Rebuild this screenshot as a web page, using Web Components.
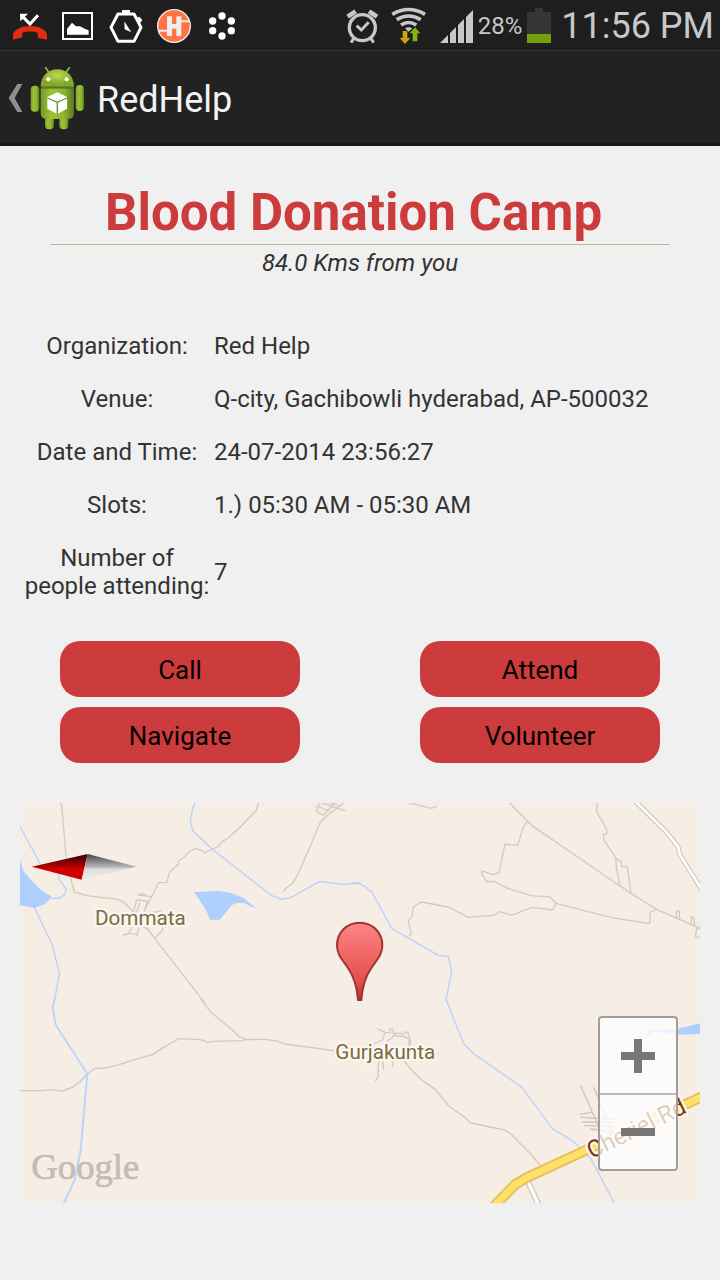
<!DOCTYPE html>
<html lang="en">
<head>
<meta charset="utf-8">
<meta name="viewport" content="width=device-width, initial-scale=1">
<title>RedHelp</title>
<style>
  html, body { margin: 0; background: #f0f0f0; }
  body { font-family: Roboto, "Noto Sans", sans-serif; color: #333; }
</style>
</head>
<body>
<status-bar></status-bar>
<action-bar>RedHelp</action-bar>
<main>
  <event-heading>Blood Donation Camp<span slot="distance">84.0 Kms from you</span></event-heading>
  <event-details></event-details>
  <action-grid>
    <pill-button>Call</pill-button>
    <pill-button>Attend</pill-button>
    <pill-button>Navigate</pill-button>
    <pill-button>Volunteer</pill-button>
  </action-grid>
  <venue-map></venue-map>
</main>

<script>
const define = (name, html) => {
  const template = document.createElement('template');
  template.innerHTML = html;
  customElements.define(name, class extends HTMLElement {
    constructor() {
      super();
      this.attachShadow({ mode: 'open' }).append(template.content.cloneNode(true));
    }
  });
};

define('status-bar', `
<style>
  :host { display: flex; align-items: center; justify-content: space-between; box-sizing: border-box; height: 51px; padding: 2px 6px 0 12px; background: #1e1e1e; border-bottom: 1px solid #333; color: #c8c8c8; }
  .notices { display: flex; gap: 12px; }
  .system { display: flex; align-items: center; }
  svg { display: block; flex: none; }
  .alarm { margin-right: 10px; }
  .wifi { margin-right: 12px; }
  .level { font-size: 24px; line-height: 32px; margin: 0 4px; }
  .clock { font-size: 36px; line-height: 48px; margin-left: 9px; }
</style>
<div class="notices">
  <svg width="36" height="36" viewBox="36 24 108 108" role="img" aria-label="Missed call">
    <path d="M65 47 90 72 114 46" fill="none" stroke="#fff" stroke-width="9"/><path d="M60 41H84L61 64Z" fill="#fff"/>
    <path d="M39 119V102C44 88 65 78 90 78S136 88 141 102V119L113 113V98C100 93 80 93 67 98V112Z" fill="#e22c14"/>
  </svg>
  <svg width="36" height="36" viewBox="180 24 108 108" role="img" aria-label="Picture">
    <rect x="189" y="39" width="87" height="78" fill="none" stroke="#fff" stroke-width="6"/>
    <path d="M201 104V87L216 68 228 79 240 79 254 86 266 91V104Z" fill="#fff"/>
  </svg>
  <svg width="36" height="36" viewBox="324 24 108 108" role="img" aria-label="Timer">
    <path d="M354 42H402L423 82 402 124H354L333 82Z" fill="none" stroke="#fff" stroke-width="9" stroke-linejoin="round"/>
    <path d="M366 30H390V44H366ZM410 54 418 50 427 60 420 70ZM373 64 394 97 374 88Z" fill="#fff"/>
  </svg>
  <svg width="36" height="36" viewBox="468 24 108 108" role="img" aria-label="H app">
    <circle cx="522" cy="78" r="49" fill="#ff7440" stroke="#eee" stroke-width="4"/>
    <path d="M475 92H508M536 64H569" stroke="#eee" stroke-width="6"/>
    <path d="M501 49H516V72H529V49H544V108H529V86H516V108H501Z" fill="#eee"/>
    <path d="M497 45V86H475M548 112V71H570" stroke="#ff7440" stroke-width="2" fill="none"/>
  </svg>
  <svg width="36" height="36" viewBox="612 24 108 108" role="img" aria-label="Sync" fill="#fff">
    <circle cx="666" cy="48" r="11"/><circle cx="694" cy="63" r="11"/><circle cx="694" cy="92" r="11"/><circle cx="666" cy="108" r="11"/><circle cx="638" cy="92" r="11"/><circle cx="638" cy="63" r="11"/>
  </svg>
</div>
<div class="system">
  <svg class="alarm" width="36" height="36" viewBox="39 24 108 108" role="img" aria-label="Alarm set" fill="none" stroke="#c8c8c8">
    <circle cx="94" cy="83" r="39" stroke-width="10"/>
    <path d="M77 77 91 90 113 67" stroke-width="9"/>
    <path d="M50 50 74 34M114 34 138 50" stroke-width="14"/>
    <path d="M68 116 60 128M120 116 128 128" stroke-width="9"/>
  </svg>
  <svg class="wifi" width="38" height="40" viewBox="180 18 114 120" role="img" aria-label="Wi-Fi">
    <g fill="none" stroke="#c8c8c8" stroke-width="11"><path d="M187 43Q236 14 285 43"/><path d="M200 59Q236 37 272 59"/><path d="M213 75Q236 60 259 75"/></g>
    <path d="M225 85Q236 78 247 85L236 95Z" fill="#c8c8c8"/>
    <path d="M218 93H232V114H241L225 132 209 114H218Z" fill="#cba50c"/>
    <path d="M255 82 271 100H262V124H248V100H239Z" fill="#7fb80c"/>
  </svg>
  <svg width="34" height="36" viewBox="330 27 102 108" role="img" aria-label="Signal strength" fill="#c8c8c8">
    <path d="M330 132 354 108V132ZM360 102 378 84V132H360ZM384 78 402 60V132H384ZM408 54 429 33V132H408Z"/>
  </svg>
  <span class="level">28%</span>
  <svg width="26" height="36" viewBox="588 27 78 108" role="img" aria-label="Battery">
    <path d="M615 27H639V39H663V105H591V39H615Z" fill="#363636"/><path d="M591 105H663V132H591Z" fill="#73a00b"/>
  </svg>
  <time class="clock" datetime="23:56">11:56 PM</time>
</div>`);

define('action-bar', `
<style>
  :host { display: flex; align-items: center; box-sizing: border-box; height: 95px; padding: 2px 8px 0; background: #222; border-bottom: 3px solid #181818; color: #f3f3f3; }
  button { display: flex; align-items: center; margin: 0 13px 0 0; padding: 0; border: 0; background: none; }
  svg { display: block; }
  h1 { margin: 0; padding-top: 4px; font-size: 36px; line-height: 48px; font-weight: 400; }
</style>
<button aria-label="Navigate up">
  <svg width="76" height="64" viewBox="24 198 228 192">
    <defs>
      <linearGradient id="g" x2="1"><stop stop-color="#76992a"/><stop offset=".3" stop-color="#9cc136"/><stop offset=".7" stop-color="#8db52f"/><stop offset="1" stop-color="#587b1b"/></linearGradient>
      <radialGradient id="h" cx=".5" cy=".35"><stop stop-color="#bdd957"/><stop offset="1" stop-color="#82a82c"/></radialGradient>
    </defs>
    <path d="M52 252H67L44 294 67 336H52L26 294Z" fill="#8f8f8f"/>
    <path d="M137 203 148 219M208 203 197 219" stroke="#94ba35" stroke-width="5" stroke-linecap="round"/>
    <path d="M122 260C122 228 144 208 172 208S222 228 222 260Z" fill="url(#h)"/>
    <circle cx="145" cy="238" r="6" fill="#fff"/><circle cx="200" cy="238" r="6" fill="#fff"/>
    <g fill="url(#g)">
      <rect x="92" y="257" width="26" height="78" rx="12"/><rect x="227" y="255" width="25" height="78" rx="12"/>
      <rect x="135" y="335" width="27" height="53" rx="12"/><rect x="178" y="335" width="27" height="53" rx="12"/>
      <path d="M122 265H222V338Q222 357 203 357H141Q122 357 122 338Z"/>
    </g>
    <path d="M123 263H221" stroke="#577920" stroke-width="4"/>
    <path d="M172 277 201 291V326L172 342 142 326V291Z" fill="#fff"/>
    <path d="M142 294 172 307 201 294M172 307V341" fill="none" stroke="#688b26" stroke-width="4"/>
  </svg>
</button>
<h1><slot></slot></h1>`);

define('event-heading', `
<style>
  :host { display: block; padding: 36px 50px 0; text-align: center; }
  h2 { margin: 0; padding: 0 13px 1px 0; border-bottom: 1px solid #c9af8c; color: #cc3c3c; font-size: 51px; line-height: 61px; font-weight: 700; }
  p { margin: 4px 0 0; font-size: 24px; line-height: 28px; font-style: italic; }
</style>
<h2><slot></slot></h2>
<p><slot name="distance"></slot></p>`);

define('event-details', `
<style>
  :host { display: block; padding: 42px 20px 0; }
  table { width: 100%; border-collapse: collapse; font-size: 24px; line-height: 28px; }
  th, td { padding: 13px 0 12px; font-weight: 400; vertical-align: middle; }
  th { width: 194px; text-align: center; }
  td { text-align: left; }
</style>
<table>
  <tr><th scope="row">Organization:</th><td>Red Help</td></tr>
  <tr><th scope="row">Venue:</th><td>Q-city, Gachibowli hyderabad, AP-500032</td></tr>
  <tr><th scope="row">Date and Time:</th><td>24-07-2014 23:56:27</td></tr>
  <tr><th scope="row">Slots:</th><td>1.) 05:30 AM - 05:30 AM</td></tr>
  <tr><th scope="row">Number of<br>people attending:</th><td>7</td></tr>
</table>`);

define('action-grid', `
<style>
  :host { display: grid; grid-template-columns: 1fr 1fr; gap: 10px 120px; padding: 29px 60px 40px; }
</style>
<slot></slot>`);

define('pill-button', `
<style>
  :host { display: block; }
  button { display: block; width: 100%; height: 56px; padding: 2px 0 0; border: 0; border-radius: 20px; background: #cc3c3c; color: #000; font: 400 26px/32px Roboto, "Noto Sans", sans-serif; }
</style>
<button><slot></slot></button>`);

define('venue-map', `
<style>
  :host { display: block; position: relative; height: 400px; margin: 0 20px 77px; overflow: hidden; background: #f6ede4; }
  svg { display: block; }
  .map { width: 100%; height: 100%; }
  button { padding: 0; border: 0; background: none; }
  .compass { position: absolute; left: 11px; top: 50px; }
  .zoom { position: absolute; right: 22px; bottom: 32px; box-sizing: border-box; width: 80px; border: 2px solid #a19d98; border-radius: 4px; background: #ffffffc0; background-clip: padding-box; }
  .zoom button { display: grid; place-items: center; width: 100%; height: 75px; }
  .zoom button + button { border-top: 2px solid #bbb8b5; height: 76px; }
</style>
<svg class="map" viewBox="0 0 2040 1200" preserveAspectRatio="xMidYMid slice" role="img" aria-label="Map of the venue near Gurjakunta">
  <defs><linearGradient id="pin" x2="0" y2="1"><stop stop-color="#ff8585"/><stop offset=".75" stop-color="#e34f4f"/><stop offset="1" stop-color="#bd2f2f"/></linearGradient></defs>
  <g fill="none" stroke-linejoin="round" stroke-linecap="round">
    <!-- north-west -->
    <g transform="translate(-30 -39)">
      <g stroke="#d3cac1" stroke-width="4">
        <path d="M150 36 155 48 169 205 182 265 193 306 230 317 325 328 345 340 370 365M434 445 500 530 585 640"/>
        <path d="M745 36 740 60 690 112 655 144 638 154 626 168 585 189 575 181 557 175 537 186 523 201 505 214 506 222 479 246 470 277 445 278 425 320 405 357"/>
        <path d="M1005 36 950 78 930 98 900 170 865 250 848 280 828 295 820 304M930 36 920 64 940 76 975 36M920 48 965 66M930 36 965 49 1005 62M950 36 985 46"/>
        <path d="M365 385 380 330 412 333 400 380M385 315 425 320M390 312 405 313M340 435 355 432 385 370 440 366 455 362M345 385 410 415 434 445 458 420 455 390M375 380 390 338M380 435 398 385M360 430 385 434M405 357 395 390 434 445"/>
      </g>
      <g fill="#afd0ff" stroke="none"><path d="M30 208 40 242 65 272 95 302 126 320 105 342 74 354 30 346Z"/><path d="M552 307 628 302 665 310 700 323 738 355 722 350 705 340 683 338 665 346 630 389 600 390 588 360 568 330Z"/></g>
      <g stroke="#b8d2fb" stroke-width="4">
        <path d="M30 110 90 220M145 250 148 268 169 298 163 314 150 324 126 325M74 354 127 465 148 550 132 640"/>
        <path d="M555 36 547 60 541 95 549 123 605 176 785 317 818 328 845 321 928 275 1005 283 1050 279"/>
      </g>
    </g>
    <!-- north-east -->
    <g transform="translate(990 -39)">
      <g stroke="#d3cac1" stroke-width="4">
        <path d="M478 38 545 106 810 288 843 310 920 358 1050 415M530 97 518 115 503 167 465 162 456 205 447 247 430 254 396 243 395 250 410 275 432 274 475 296 545 317 600 321 618 340 608 360 545 352 485 376 450 365 430 376 355 382 295 351 214 336 190 351 186 380 175 392 184 432 175 438"/>
        <path d="M618 340 785 383 899 401 901 366 920 358M741 38 740 65 770 118 770 132 760 134 762 150 798 205 799 235 810 288M798 205 813 213 815 229 832 230 843 310M979 384 979 363 988 364 988 384M1024 402 1024 379 1033 388 1033 406M1050 415 1040 416 1036 440 1050 442M176 38 245 55 258 49"/>
      </g>
      <path d="M858 36 950 127 984 170 990 195 1056 300" stroke="#cec7be" stroke-width="15"/>
      <path d="M858 36 950 127 984 170 990 195 1056 300" stroke="#fff" stroke-width="8"/>
      <path d="M0 280 20 278 46 290 66 307 126 416 265 496 295 500 305 542 288 632" stroke="#b8d2fb" stroke-width="4"/>
    </g>
    <!-- south-west -->
    <g transform="translate(-30 591)">
      <path d="M574 -2 600 34 675 97 686 109 710 118 770 119 800 123 825 132 980 153M710 118 695 122 610 124 595 127 570 119 507 116 460 142 430 163 380 177 320 196 280 205 257 204 232 223 208 247 185 263 157 273 125 269 95 272 30 272" stroke="#d3cac1" stroke-width="4"/>
      <path d="M134 -2 128 20 137 74 232 222 208 247M232 222 220 355 212 450 194 540 162 609" stroke="#bdd5fa" stroke-width="6"/>
    </g>
    <!-- south-east -->
    <g transform="translate(990 591)">
      <path d="M160 180 185 210 218 242 256 268 296 318 345 352 362 369 464 390 483 402 545 465 575 502M83 87 105 97 98 120 70 132M105 97 120 98 120 87 128 88 132 105 155 110 165 95 175 100 183 130 170 145M160 110 178 115 175 145M135 100 155 100M87 160 84 232 77 242M96 165 101 208M128 155 128 199M110 125 135 105" stroke="#d3cac1" stroke-width="4"/>
      <path d="M692 257 750 390M732 263 790 405M690 343 722 337M692 352 790 357M697 366 800 367M704 376 800 381M722 387 800 396" stroke="#cdc5bc" stroke-width="4"/>
      <path d="M288 -2 341 131 375 164 516 262 607 386 670 424 722 475 793 609" stroke="#b8d2fb" stroke-width="4"/>
      <path d="M888 110 898 90 980 88 1050 70V101L1000 104 910 96Z" fill="#afd0ff"/>
      <path d="M534 545 566 615" stroke="#cec7be" stroke-width="18"/><path d="M534 545 566 615" stroke="#fff" stroke-width="10"/>
      <path d="M425 626 495 554 530 533 1060 288" stroke="#e4bf5d" stroke-width="32"/>
      <path d="M425 626 495 554 530 533 1060 288" stroke="#ffe168" stroke-width="21"/>
    </g>
  </g>
  <g font-family="Roboto, sans-serif" font-size="62" fill="#7c6b3d" stroke="#fbf6f1" stroke-width="14" stroke-linejoin="round" paint-order="stroke">
    <text x="225" y="367">Dommata</text>
    <text x="946" y="767">Gurjakunta</text>
    <text transform="translate(1715 1068) rotate(-26)" font-size="71" fill="#7a3800">Cheriel Rd</text>
  </g>
  <text x="34" y="1129" font-family="Liberation Serif, serif" font-size="110" fill="#c3bcb5" stroke="#c3bcb5" stroke-width="2">Google</text>
  <path transform="translate(990 -39)" d="M29 398C-10 398 -39 428 -39 466C-39 520 15 520 24 630H34C43 520 97 520 97 466C97 428 68 398 29 398Z" fill="url(#pin)" stroke="#a03434" stroke-width="6"/>
</svg>
<button class="compass" aria-label="Point north">
  <svg width="106" height="28" viewBox="31 38 318 84">
    <defs>
      <linearGradient id="r" x2="0" y2="1"><stop stop-color="#300"/><stop offset=".5" stop-color="#b00000"/><stop offset=".6" stop-color="#d60000"/><stop offset="1" stop-color="#c00"/></linearGradient>
      <linearGradient id="w" x2="0" y2="1"><stop stop-color="#444"/><stop offset=".5" stop-color="#b5b5b5"/><stop offset=".6" stop-color="#ddd"/><stop offset="1" stop-color="#eee"/></linearGradient>
    </defs>
    <path d="M33 79 201 41 183 118Z" fill="url(#r)"/><path d="M201 41 348 79 183 118Z" fill="url(#w)"/>
  </svg>
</button>
<div class="zoom">
  <button aria-label="Zoom in"><svg width="34" height="34" viewBox="0 0 34 34"><path d="M13 0H21V13H34V21H21V34H13V21H0V13H13Z" fill="#777"/></svg></button>
  <button aria-label="Zoom out"><svg width="34" height="34" viewBox="0 0 34 34"><path d="M0 13H34V21H0Z" fill="#777"/></svg></button>
</div>`);
</script>
</body>
</html>
